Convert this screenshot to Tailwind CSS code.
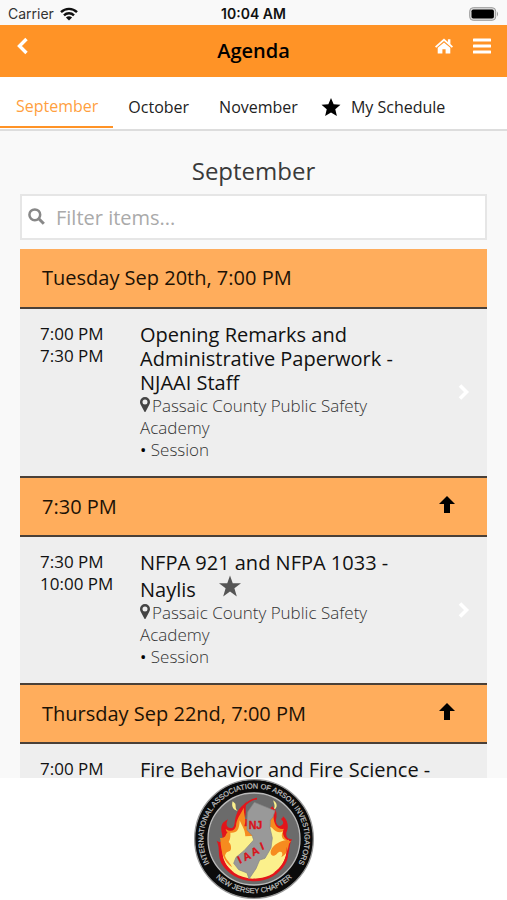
<!DOCTYPE html>
<html lang="en">
<head>
    <meta charset="UTF-8">
    <meta name="viewport" content="width=device-width, initial-scale=1.0">
    <title>Agenda</title>
    <script src="https://cdn.jsdelivr.net/npm/@tailwindcss/browser@4"></script>
</head>
<body class="h-screen flex flex-col overflow-hidden bg-[#f9f9f9] text-[#111] font-['Open_Sans','Noto_Sans',sans-serif]">
    <!-- Status Bar -->
    <div class="relative h-[25px] shrink-0 flex items-center justify-between px-2 pt-0.5 font-['Inter',sans-serif] text-sm">
        <div class="flex items-center gap-1.5 text-[#333]">
            <span>Carrier</span>
            <svg class="w-[18px] h-[14px]" viewBox="0 0 18 14" fill="none" stroke="#111" stroke-width="2.4">
                <path d="M1 5.2C5.500 .8 12.500 .8 17 5.200"/>
                <path d="M4 8.300C6.800 5.600 11.200 5.600 14 8.300"/>
                <path d="M9 13.500L5.900 10.400C7.600 8.900 10.400 8.900 12.100 10.400Z" fill="#111" stroke="none"/>
            </svg>
        </div>
        <span class="absolute left-1/2 -translate-x-1/2 font-semibold">10:04 AM</span>
        <svg class="w-[30px] h-[14px]" viewBox="0 0 30 14">
            <rect x=".7" y=".7" width="26" height="12.600" rx="3.500" fill="#ddd" stroke="#999"/>
            <rect x="2.500" y="2.500" width="22.400" height="9" rx="1.800" fill="#000"/>
            <path d="M28 4.500q2 2.500 0 5z" fill="#999"/>
        </svg>
    </div>

    <!-- Header -->
    <header class="h-[52px] shrink-0 grid grid-cols-3 bg-[#ff9326] px-4">
        <button type="button" aria-label="Back" class="justify-self-start h-[42px] w-3 flex items-center justify-center text-white">
            <svg class="w-3 h-[18px]" viewBox="0 0 12 18" fill="none" stroke="currentColor" stroke-width="3.400"><path d="M10.500 2L3.500 9l7 7"/></svg>
        </button>
        <h1 class="self-center text-center text-xl font-semibold text-black">Agenda</h1>
        <div class="justify-self-end h-[42px] flex items-center gap-5 text-white">
            <button type="button" aria-label="Home">
                <svg class="w-[18px] h-[16px]" viewBox="0 0 18 16" fill="currentColor">
                    <path d="M9 .5L0 8.400l1.200 1.400L9 3.100l7.800 6.700L18 8.400l-2.600-2.300V1.200h-2.500v2.700z"/>
                    <path d="M9 4.400L2.700 9.800V15.500h4.700v-4.300h3.200v4.300h4.700V9.800z"/>
                </svg>
            </button>
            <button type="button" aria-label="Menu">
                <svg class="w-[18px] h-[16px]" viewBox="0 0 18 16" fill="currentColor">
                    <rect y=".5" width="18" height="3" rx=".6"/><rect y="6.500" width="18" height="3" rx=".6"/><rect y="12.500" width="18" height="3" rx=".6"/>
                </svg>
            </button>
        </div>
    </header>

    <!-- Tabs -->
    <nav class="h-[54px] shrink-0 flex bg-white border-b-2 border-[#ddd] text-base text-[#222]">
        <a href="#" class="h-[51px] pl-4 pr-[15px] pt-2 flex items-center border-b-2 border-[#ff9326] text-[#ff9f40]">September</a>
        <a href="#" class="px-[15px] pt-2 flex items-center">October</a>
        <a href="#" class="px-[15px] pt-2 flex items-center">November</a>
        <a href="#" class="pl-2 pt-2 flex items-center gap-2.5">
            <svg class="w-5 h-[18px]" viewBox="0 0 20 19" fill="#000"><path d="M10 0l2.800 6.600 7.200.6-5.500 4.700 1.700 7.100L10 15.200 3.800 19l1.700-7.100L0 7.200l7.200-.6z"/></svg>
            My Schedule
        </a>
    </nav>

    <!-- Agenda -->
    <main class="flex-1 min-h-0 overflow-hidden px-5 pt-6">
        <h2 class="mb-[7px] text-center text-2xl leading-8 text-[#3a3a3a]">September</h2>
        <div class="relative mb-[9px]">
            <label for="filter" class="sr-only">Filter items</label>
            <svg class="absolute left-2 top-[14px] w-[17px] h-[17px]" viewBox="0 0 17 17" fill="none" stroke="#888">
                <circle cx="6.800" cy="6.800" r="5.400" stroke-width="2.500"/><path d="M10.800 10.800l5 5" stroke-width="3"/>
            </svg>
            <input id="filter" type="text" placeholder="Filter items..." class="block w-full h-[46px] bg-white border-2 border-[#e6e6e6] pl-[34px] text-xl placeholder:text-[#aaa] outline-none">
        </div>

        <h3 class="h-[60px] flex items-center justify-between bg-[#ffad5c] border-b-2 border-[#4a4038] pl-[22px] pr-8 text-xl text-[#1c1206]">Tuesday Sep 20th, 7:00 PM</h3>
        <a href="#" class="flex bg-[#eee] pl-5 pr-[17px] pt-3.5 pb-[15px]">
            <div class="w-[100px] shrink-0 text-[17px] leading-[22px]">7:00 PM<br>7:30 PM</div>
            <div class="flex-1 pr-3.5">
                <h4 class="text-xl leading-6">Opening Remarks and Administrative Paperwork - NJAAI Staff</h4>
                <div class="pr-10 text-[17px] leading-[22px] font-light text-[#333]">
                    <svg class="inline-block align-baseline w-[10px] h-[15px] mr-0.5" viewBox="0 0 10 15" fill="#444"><path fill-rule="evenodd" d="M5 0a5 5 0 0 1 5 5c0 1.400-.5 2.300-1 3.300L5.700 14.500q-.7 1-1.400 0L1 8.300C.5 7.300 0 6.400 0 5a5 5 0 0 1 5-5zM5 2.500a2.500 2.500 0 1 0 0 5 2.500 2.500 0 0 0 0-5z"/></svg>Passaic County Public Safety Academy
                </div>
                <div class="text-[17px] leading-[22px] font-light text-[#333]"><span class="font-normal text-black">•</span> Session</div>
            </div>
            <svg class="self-center w-3 h-4" viewBox="0 0 12 16" fill="none" stroke="#fff" stroke-width="3.600"><path d="M2 1.500L8.500 8 2 14.500"/></svg>
        </a>

        <h3 class="h-[61px] flex items-center justify-between bg-[#ffad5c] border-t-2 border-b-2 border-[#4a4038] pl-[22px] pr-8 text-xl text-[#1c1206]">
            7:30 PM
            <button type="button" aria-label="Back to top" class="pb-1">
                <svg class="w-4 h-[17px]" viewBox="0 0 16 17" fill="#000"><path d="M8 0l8 8h-5v9H5V8H0z"/></svg>
            </button>
        </h3>
        <a href="#" class="flex bg-[#eee] pl-5 pr-[17px] pt-3.5 pb-[15px]">
            <div class="w-[100px] shrink-0 text-[17px] leading-[22px]">7:30 PM<br>10:00 PM</div>
            <div class="flex-1 pr-3.5">
                <h4 class="text-xl leading-6">NFPA 921 and NFPA 1033 - Naylis
                    <svg class="inline-block align-baseline w-[22px] h-[22px] ml-[18px]" viewBox="0 0 20 19" fill="#555"><path d="M10 0l2.500 7H20l-6 4.500L16.200 19 10 14.600 3.800 19 6 11.500 0 7h7.500z"/></svg>
                </h4>
                <div class="pr-10 text-[17px] leading-[22px] font-light text-[#333]">
                    <svg class="inline-block align-baseline w-[10px] h-[15px] mr-0.5" viewBox="0 0 10 15" fill="#444"><path fill-rule="evenodd" d="M5 0a5 5 0 0 1 5 5c0 1.400-.5 2.300-1 3.300L5.700 14.500q-.7 1-1.400 0L1 8.300C.5 7.300 0 6.400 0 5a5 5 0 0 1 5-5zM5 2.500a2.500 2.500 0 1 0 0 5 2.500 2.500 0 0 0 0-5z"/></svg>Passaic County Public Safety Academy
                </div>
                <div class="text-[17px] leading-[22px] font-light text-[#333]"><span class="font-normal text-black">•</span> Session</div>
            </div>
            <svg class="self-center w-3 h-4" viewBox="0 0 12 16" fill="none" stroke="#fff" stroke-width="3.600"><path d="M2 1.500L8.500 8 2 14.500"/></svg>
        </a>

        <h3 class="h-[61px] flex items-center justify-between bg-[#ffad5c] border-t-2 border-b-2 border-[#4a4038] pl-[22px] pr-8 text-xl text-[#1c1206]">
            Thursday Sep 22nd, 7:00 PM
            <button type="button" aria-label="Back to top" class="pb-1">
                <svg class="w-4 h-[17px]" viewBox="0 0 16 17" fill="#000"><path d="M8 0l8 8h-5v9H5V8H0z"/></svg>
            </button>
        </h3>
        <a href="#" class="flex bg-[#eee] pl-5 pr-[17px] pt-3.5 pb-[15px]">
            <div class="w-[100px] shrink-0 text-[17px] leading-[22px]">7:00 PM</div>
            <div class="flex-1 pr-3.5">
                <h4 class="text-xl leading-6">Fire Behavior and Fire Science -</h4>
            </div>
        </a>
    </main>

    <!-- Chapter Logo -->
    <footer class="h-[122px] shrink-0 flex justify-center bg-white pt-px">
        <svg class="w-[120px] h-[120px]" viewBox="29 27 360 360" role="img" aria-label="New Jersey Chapter logo">
            <defs>
                <path id="ring-top" d="M90 302A152 152 0 1 1 328 302"/>
                <path id="ring-bottom" d="M89 317A163 163 0 0 0 329 317"/>
            </defs>
            <circle cx="209" cy="207" r="178" fill="#0b0b0b" stroke="#999" stroke-width="4"/>
            <circle cx="209" cy="207" r="138" fill="#6b6b6b" stroke="#bbb" stroke-width="4"/>
            <g font-family="Liberation Sans, sans-serif" font-size="22" fill="#c4c4c4" stroke="#c4c4c4" stroke-width=".6">
                <text text-anchor="middle"><textPath href="#ring-top" startOffset="50%">INTERNATIONAL ASSOCIATION OF ARSON INVESTIGATORS</textPath></text>
                <text text-anchor="middle"><textPath href="#ring-bottom" startOffset="50%">NEW JERSEY CHAPTER</textPath></text>
            </g>
            <!-- flames -->
            <path fill="#e3151b" d="M97 212C112 222 117 210 113 192C107 170 113 157 131 148C120 169 133 178 145 173C153 168 149 151 157 132C164 113 176 107 188 94C180 114 188 125 181 147L250 150C246 132 252 119 265 108C265 125 281 132 275 148C273 160 282 173 292 166C303 157 292 146 296 139C313 154 313 173 306 188C304 204 314 207 323 208C313 225 317 251 302 281C284 315 250 333 205 334C166 331 131 315 111 280C99 255 108 233 97 212Z"/>
            <path fill="#f68b1f" d="M106 203C122 207 130 193 124 177C139 187 151 183 155 168C156 147 168 135 179 112C176 133 188 145 180 169L253 167C257 150 261 143 268 139C267 160 279 181 299 176C289 193 305 212 320 214C307 229 309 241 294 260L132 254C113 240 119 220 106 203Z"/>
            <path fill="#fbf08c" d="M138 188C157 190 165 181 166 151C174 171 182 177 183 199L251 196C244 174 252 166 263 173C274 187 288 190 296 184C287 199 296 211 308 211C314 234 306 264 291 289C270 315 240 326 204 326C164 323 130 302 119 270C111 249 119 239 111 221C128 230 140 215 138 188Z"/>
            <path fill="#f68b1f" d="M108 205C129 210 142 218 140 237C137 249 126 240 122 257C126 271 139 278 143 292C119 276 109 248 108 205ZM314 209C294 210 273 219 263 235C252 253 265 265 278 251C289 239 300 248 290 262C309 252 314 235 314 209Z"/>
            <path fill="#e3151b" d="M109 229C110 267 126 291 148 306C121 296 103 275 109 229ZM307 230C309 267 291 292 267 309C302 296 319 268 307 230Z"/>
            <path fill="#fbf08c" d="M145 94C140 109 147 120 160 122C152 116 155 108 153 101ZM267 91C267 101 276 106 266 122C280 114 281 100 267 91Z"/>
            <path fill="none" stroke="#e3151b" stroke-width="5" d="M119 158Q110 176 128 189M292 145Q310 165 300 181M174 114Q196 87 218 86M263 114Q281 128 270 145"/>
            <!-- state outline -->
            <path fill="#999" stroke="#858585" stroke-width="2" d="M210 97L272 122L266 141L258 151L257 174L264 204L260 234L242 265L226 270L215 296L194 327L188 309L163 299L148 280L155 262L179 242L208 210L203 196L188 180L188 151L190 126Z"/>
            <g font-family="Liberation Sans, sans-serif" font-weight="bold" fill="#d8131b" stroke="#d8131b" stroke-width="1">
                <text x="193" y="177" font-size="32">NJ</text>
                <text font-size="32" transform="translate(166 281) rotate(-26)">I</text>
                <text font-size="32" transform="translate(181 274) rotate(-24)">A</text>
                <text font-size="32" transform="translate(206 259) rotate(-24)">A</text>
                <text font-size="32" transform="translate(233 240) rotate(-22)">I</text>
            </g>
        </svg>
    </footer>
</body>
</html>
